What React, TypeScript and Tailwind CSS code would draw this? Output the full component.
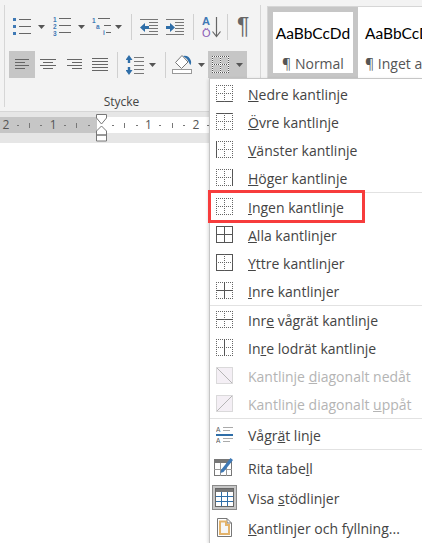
import React from "react";

const Caret = () => (
  <svg width="7" height="4" viewBox="0 0 7 4" className="shrink-0">
    <path d="M0 0h7L3.5 4z" fill="#555" />
  </svg>
);

const Sep = ({ className = "" }: { className?: string }) => <div className={`w-px h-[26px] bg-[#d0d0d0] shrink-0 ${className}`} />;

// short horizontal lines used by the list and alignment icons
function Lines({ rows, w = 18, h = 18, color = "#666" }: { rows: [number, number, number][]; w?: number; h?: number; color?: string }) {
  return (
    <svg width={w} height={h} viewBox={`0 0 ${w} ${h}`} shapeRendering="crispEdges" className="shrink-0">
      {rows.map(([x, y, len], i) => (
        <rect key={i} x={x} y={y} width={len} height="1" fill={color} />
      ))}
    </svg>
  );
}

const Bullets = () => (
  <svg width="19" height="18" viewBox="0 0 19 18" shapeRendering="crispEdges" className="shrink-0">
    {[1, 8, 15].map((y) => (
      <g key={y}>
        <rect x="0" y={y - 1} width="3" height="3" rx="1" fill="#3f79b5" />
        <rect x="6" y={y} width="12" height="1" fill="#666" />
      </g>
    ))}
  </svg>
);

const Numbered = () => (
  <svg width="19" height="19" viewBox="0 0 19 19" className="shrink-0">
    {[1, 8, 15].map((y, i) => (
      <g key={y}>
        <text x="0" y={y + 4} fontSize="6.5" fontWeight="700" fill="#3f79b5" fontFamily="Liberation Sans, sans-serif">{i + 1}</text>
        <rect x="6" y={y} width="12" height="1" fill="#666" />
      </g>
    ))}
  </svg>
);

const Multi = () => (
  <svg width="20" height="19" viewBox="0 0 20 19" className="shrink-0">
    <text x="0" y="6" fontSize="6.5" fontWeight="700" fill="#3f79b5" fontFamily="Liberation Sans, sans-serif">1</text>
    <text x="4" y="12" fontSize="6.5" fontWeight="700" fill="#3f79b5" fontFamily="Liberation Sans, sans-serif">a</text>
    <text x="11" y="18" fontSize="6.5" fontWeight="700" fill="#3f79b5" fontFamily="Liberation Sans, sans-serif">i</text>
    <rect x="6" y="1" width="12" height="1" fill="#666" />
    <rect x="12" y="8" width="7" height="1" fill="#666" />
    <rect x="14" y="15" width="5" height="1" fill="#666" />
  </svg>
);

function Indent({ right }: { right?: boolean }) {
  return (
    <svg width="19" height="18" viewBox="0 0 19 18" className="shrink-0">
      {[0, 3, 6, 9, 12, 15].map((y) => (
        <rect key={y} x={y > 2 && y < 13 ? 9 : 0} y={y + 1} width={y > 2 && y < 13 ? 9 : 18} height="1" fill="#777" />
      ))}
      {right ? (
        <path d="M0 8h4V5l5 4.5L4 14v-3H0z" fill="#2f6ea8" />
      ) : (
        <path d="M9 8H5V5L0 9.5 5 14v-3h4z" fill="#2f6ea8" />
      )}
    </svg>
  );
}

const Sort = () => (
  <svg width="20" height="24" viewBox="0 0 20 24" className="shrink-0">
    <text x="0" y="10" fontSize="11" fontWeight="700" fill="#3f79b5" fontFamily="Liberation Sans, sans-serif">A</text>
    <text x="0" y="22" fontSize="11" fill="#8a5bb5" fontFamily="Liberation Sans, sans-serif">Ö</text>
    <path d="M14.5 2v19M10.5 16.5l4 5 4-5" stroke="#666" strokeWidth="1.2" fill="none" />
  </svg>
);

const Spacing = () => (
  <svg width="18" height="20" viewBox="0 0 18 20" className="shrink-0">
    <path d="M3 0l3.5 5H4.2v3H1.8V5H-.5zM3 20l3.5-5H4.2v-3H1.8v3H-.5z" fill="#2f6ea8" />
    {[2, 6, 10, 14, 18].map((y) => (
      <rect key={y} x="8" y={y} width="10" height="1" fill="#777" />
    ))}
  </svg>
);

const Fill = () => (
  <svg width="21" height="21" viewBox="0 0 21 21" className="shrink-0">
    <path d="M3.5 8.5l6.5-7 6 6.5-6.500 6.500z" fill="#fff" stroke="#777" />
    <path d="M11 2q6-1 8 5 .5 2-.5 4-1-1-1.500-2.500Q15 4 11 2z" fill="#2f6ea8" />
    <rect x="0.5" y="15.500" width="19" height="4" fill="#fff" stroke="#999" />
  </svg>
);

type Edges = { top?: boolean; bottom?: boolean; left?: boolean; right?: boolean; h?: boolean; v?: boolean };

// dotted grid with the solid edges picked out
function BorderIcon({ top, bottom, left, right, h, v, size = 17, color = "#555", halo }: Edges & { size?: number; color?: string; halo?: boolean }) {
  const e = size - 0.5;
  const m = Math.floor(size / 2) + 0.5;
  const line = (key: string, d: string, solid?: boolean) => (
    <g key={key}>
      {halo && <path d={d} stroke="#fff" fill="none" />}
      <path d={d} stroke={solid ? color : halo ? "#555" : "#666"} strokeDasharray={solid ? undefined : "1 1"} fill="none" />
    </g>
  );
  return (
    <svg width={size} height={size} viewBox={`0 0 ${size} ${size}`} shapeRendering="crispEdges" className="shrink-0">
      {line("t", `M0 0.5H${size}`, top)}
      {line("b", `M0 ${e}H${size}`, bottom)}
      {line("l", `M0.5 0V${size}`, left)}
      {line("r", `M${e} 0V${size}`, right)}
      {line("h", `M0 ${m}H${size}`, h)}
      {line("v", `M${m} 0V${size}`, v)}
    </svg>
  );
}

function Diagonal({ up }: { up?: boolean }) {
  return (
    <svg width="17" height="17" viewBox="0 0 17 17" className="shrink-0">
      <rect x="0.5" y="0.5" width="16" height="16" fill="#f4eff5" stroke="#bbb" strokeDasharray="1 1" />
      <path d={up ? "M1 16L16 1" : "M1 1l15 15"} stroke="#b5b5b5" />
    </svg>
  );
}

const HLine = () => (
  <svg width="17" height="17" viewBox="0 0 17 17" className="shrink-0">
    <text x="0" y="6" fontSize="6.5" fill="#555" fontFamily="Liberation Sans, sans-serif">A</text>
    <text x="0" y="16.500" fontSize="6.5" fill="#555" fontFamily="Liberation Sans, sans-serif">A</text>
    <rect x="7" y="1" width="10" height="1" fill="#aaa" />
    <rect x="7" y="4" width="7" height="1" fill="#aaa" />
    <rect x="0" y="8" width="17" height="2" fill="#2f6ea8" />
    <rect x="7" y="12" width="10" height="1" fill="#aaa" />
    <rect x="7" y="15" width="7" height="1" fill="#aaa" />
  </svg>
);

const DrawTable = () => (
  <svg width="20" height="20" viewBox="0 0 20 20" className="shrink-0">
    <rect x="0.5" y="2.500" width="17" height="16" fill="#fff" stroke="#777" />
    <rect x="0" y="2" width="18" height="4" fill="#777" />
    <path d="M6.500 6v13M12.500 6v13M0 12.500h18" stroke="#999" />
    <path d="M7 13L16.500 1 19 3 9.500 15l-3 1z" fill="#3f79b5" />
  </svg>
);

const Gridlines = () => (
  <svg width="19" height="19" viewBox="0 0 19 19" shapeRendering="crispEdges" className="shrink-0">
    <rect x="0.5" y="0.5" width="18" height="18" fill="#fff" stroke="#666" />
    <rect x="1" y="1" width="17" height="3" fill="#777" />
    <path d="M6.500 4v14M12.500 4v14M1 8.500h17M1 13.500h17" stroke="#2f6ea8" />
  </svg>
);

const BordersFill = () => (
  <svg width="15" height="19" viewBox="0 0 15 19" className="shrink-0">
    <path d="M.5.5H10L14.5 5v13.500H.5z" fill="#fff" stroke="#777" />
    <path d="M10 .5V5h4.500" fill="none" stroke="#777" />
    <path d="M3 3.500h6V7h3v9H3z" fill="#f6f6f6" stroke="#e3b36b" strokeWidth="2" />
  </svg>
);

type Row = { icon: React.ReactNode; label: React.ReactNode; disabled?: boolean; sep?: boolean; cls?: string };

const rows: Row[] = [
  { icon: <BorderIcon bottom />, label: <><u>N</u>edre kantlinje</> },
  { icon: <BorderIcon top />, label: <><u>Ö</u>vre kantlinje</> },
  { icon: <BorderIcon left />, label: <><u>V</u>änster kantlinje</> },
  { icon: <BorderIcon right />, label: <><u>H</u>öger kantlinje</> },
  { icon: <BorderIcon />, label: <><u>I</u>ngen kantlinje</>, sep: true },
  { icon: <BorderIcon top bottom left right h v />, label: <><u>A</u>lla kantlinjer</> },
  { icon: <BorderIcon top bottom left right />, label: <><u>Y</u>ttre kantlinjer</> },
  { icon: <BorderIcon h v />, label: <><u>I</u>nre kantlinjer</> },
  { icon: <BorderIcon h />, label: <>Inr<u>e</u> vågrät kantlinje</>, sep: true },
  { icon: <BorderIcon v />, label: <>In<u>r</u>e lodrät kantlinje</> },
  { icon: <Diagonal />, label: <>Kantlinje <u>d</u>iagonalt nedåt</>, disabled: true },
  { icon: <Diagonal up />, label: <>Kantlinje diagonalt <u>u</u>ppåt</>, disabled: true },
];

function MenuRow({ icon, label, disabled, sep, cls = "h-[28.25px]", iconBox }: Row & { iconBox?: boolean }) {
  return (
    <div className={`flex items-center shrink-0 ${cls} ${sep ? "border-t border-[#e2e2e2]" : ""} ${disabled ? "text-[#b4b4b4]" : "text-[#444]"}`}>
      <div className="w-[38px] pr-[10px] flex justify-center items-center shrink-0">
        {iconBox ? <div className="w-[25px] h-[25px] flex items-center justify-center bg-[#c6c6c6] border border-[#8a8a8a] shrink-0">{icon}</div> : icon}
      </div>
      <span className="whitespace-nowrap pt-[2px]">{label}</span>
    </div>
  );
}

const Dot = () => <div className="w-[2px] h-[1px] bg-[#777]" />;
const Tick = () => <div className="w-[1px] h-[5px] bg-[#777]" />;

function Cell({ children }: { children: React.ReactNode }) {
  return <div className="w-[11.85px] shrink-0 flex justify-center items-center text-[#555] text-[12px]">{children}</div>;
}

export default function App() {
  return (
    <div className="relative w-[422px] h-[543px] overflow-hidden bg-white font-['Open_Sans',sans-serif]">
      {/* ribbon */}
      <div className="flex h-[112px] bg-[#f3f3f3] border-b border-[#d6d6d6] pt-[5px]">
        <div className="w-[4px] shrink-0" />
        <div className="w-px h-[102px] bg-[#d6d6d6] shrink-0" />
        <div className="w-[255px] shrink-0 flex flex-col">
          {/* first toolbar row */}
          <div className="flex items-center h-[27px] mt-[8px]">
            <div className="ml-[8px]"><Bullets /></div>
            <div className="ml-[6px]"><Caret /></div>
            <div className="ml-[8px]"><Numbered /></div>
            <div className="ml-[6px]"><Caret /></div>
            <div className="ml-[7px]"><Multi /></div>
            <div className="ml-[3px]"><Caret /></div>
            <Sep className="ml-[9px]" />
            <div className="ml-[8px]"><Indent /></div>
            <div className="ml-[7px]"><Indent right /></div>
            <Sep className="ml-[8px]" />
            <div className="ml-[8px]"><Sort /></div>
            <Sep className="ml-[5px]" />
            <div className="ml-[9px] text-[23px] leading-none text-[#666] font-['Liberation_Sans',sans-serif]">¶</div>
          </div>
          {/* second toolbar row */}
          <div className="flex items-center h-[27px] mt-[11px]">
            <div className="ml-[4px] w-[26px] h-[27px] bg-[#c6c6c6] flex items-center justify-center">
              <Lines w={15} h={11} rows={[[0, 0, 14], [0, 3, 10], [0, 6, 14], [0, 9, 10]]} />
            </div>
            <div className="ml-[5px]">
              <Lines w={16} h={11} rows={[[0, 0, 16], [3, 3, 10], [0, 6, 16], [3, 9, 10]]} />
            </div>
            <div className="ml-[11px]">
              <Lines w={15} h={11} rows={[[0, 0, 15], [5, 3, 10], [0, 6, 15], [5, 9, 10]]} />
            </div>
            <div className="ml-[10px]">
              <Lines w={16} h={13} rows={[[0, 0, 16], [0, 3, 16], [0, 6, 16], [0, 9, 16], [0, 12, 16]]} />
            </div>
            <Sep className="ml-[9px]" />
            <div className="ml-[8px]"><Spacing /></div>
            <div className="ml-[5px]"><Caret /></div>
            <Sep className="ml-[9px]" />
            <div className="ml-[6px]"><Fill /></div>
            <div className="ml-[5px]"><Caret /></div>
            <div className="ml-[3px] w-[39px] h-[27px] bg-[#c6c6c6] flex items-center pl-[4px] gap-[7px]">
              <BorderIcon size={17} halo />
              <Caret />
            </div>
          </div>
          <div className="text-center text-[12px] text-[#444] mt-[15px] leading-[18px] pr-[22px]">Stycke</div>
        </div>
        <div className="w-px h-[102px] bg-[#d6d6d6] shrink-0" />
        {/* style gallery */}
        <div className="flex flex-1 min-w-0 ml-[6px] mt-[1px] h-[72px] bg-white border-t border-l border-[#d6d6d6] overflow-hidden">
          <div className="w-[90px] shrink-0 h-[71px] border-[5px] border-[#c6c6c6] bg-white flex flex-col items-center">
            <div className="text-[15.5px] leading-[20px] mt-[11px] text-black font-['Lato',sans-serif]">AaBbCcDd</div>
            <div className="text-[14px] leading-[18px] mt-[12px] text-[#555]">¶ Normal</div>
          </div>
          <div className="pl-[7px] shrink-0 flex flex-col">
            <div className="text-[15.5px] leading-[20px] mt-[16px] text-black font-['Lato',sans-serif]">AaBbCcDd</div>
            <div className="text-[14px] leading-[18px] mt-[12px] text-[#555] whitespace-nowrap">¶ Inget av</div>
          </div>
        </div>
      </div>

      {/* ruler */}
      <div className="h-[31px] bg-[#e6e6e6] pt-[5px]">
        <div className="flex h-[16px]">
          <div className="w-[97px] shrink-0 bg-[#c6c6c6] flex">
            <Cell>2</Cell><Cell><Dot /></Cell><Cell><Tick /></Cell><Cell><Dot /></Cell>
            <Cell>1</Cell><Cell><Dot /></Cell><Cell><Tick /></Cell><Cell><Dot /></Cell>
          </div>
          <div className="flex-1 bg-white flex pl-[10px]">
            <Cell><Dot /></Cell><Cell><Tick /></Cell><Cell><Dot /></Cell><Cell>1</Cell>
            <Cell><Dot /></Cell><Cell><Tick /></Cell><Cell><Dot /></Cell><Cell>2</Cell>
            <Cell><Dot /></Cell>
          </div>
        </div>
      </div>

      {/* indent marker */}
      <svg width="12" height="28" viewBox="0 0 12 28" className="absolute left-[96px] top-[114px]">
        <path d="M.5.5h10V4L5.5 10 .5 4zM5.5 12l5 5v4H.5v-4zM.5 21h10v6H.5z" fill="#fff" stroke="#777" />
      </svg>

      {/* dropdown */}
      <div className="absolute left-[209px] top-[78px] w-[213px] h-[465px] bg-white border-l border-t border-[#c6c6c6] shadow-[-1px_1px_3px_rgba(0,0,0,0.15)] flex flex-col text-[14px]">
        {rows.map((r, i) => (
          <MenuRow key={i} {...r} />
        ))}
        <MenuRow icon={<HLine />} label={<>Vågr<u>ä</u>t linje</>} sep cls="h-[31px]" />
        <div className="h-px bg-[#e2e2e2] ml-[39px] shrink-0 mb-[2px]" />
        <MenuRow icon={<DrawTable />} label={<>Rita tabe<u>l</u>l</>} cls="h-[30px]" />
        <MenuRow icon={<Gridlines />} label={<>Visa <u>s</u>tödlinjer</>} cls="h-[30px]" iconBox />
        <MenuRow icon={<BordersFill />} label={<><u>K</u>antlinjer och fyllning...</>} cls="h-[30px]" />
      </div>

      {/* red highlight */}
      <div className="absolute left-[208px] top-[190px] w-[157px] h-[33px] border-[3px] border-[#f73c3c]" />
    </div>
  );
}
